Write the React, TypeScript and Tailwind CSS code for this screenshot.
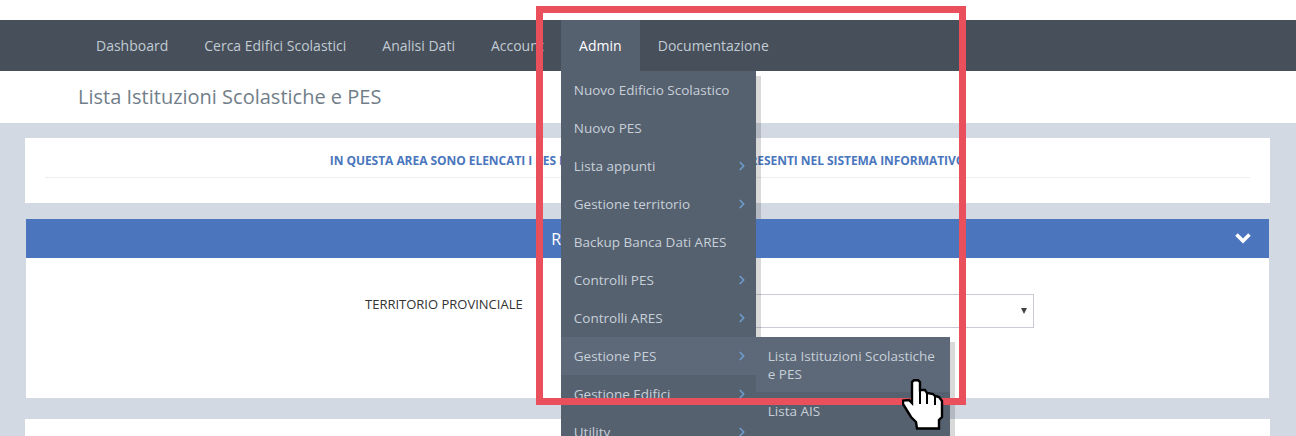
import { ChevronRight } from "lucide-react";

const adminItems = [
  { label: "Nuovo Edificio Scolastico" },
  { label: "Nuovo PES" },
  { label: "Lista appunti", arrow: true },
  { label: "Gestione territorio", arrow: true },
  { label: "Backup Banca Dati ARES" },
  { label: "Controlli PES", arrow: true },
  { label: "Controlli ARES", arrow: true },
  { label: "Gestione PES", arrow: true, active: true },
  { label: "Gestione Edifici", arrow: true },
  { label: "Utility", arrow: true },
];

function HandCursor() {
  return (
    <svg width="42" height="52" viewBox="0 0 42 52" className="absolute left-[902px] top-[379px]">
      <path
        d="M10 3 L12 1.2 L16 1.2 L18 3 L18 11 L23 11 L25 14 L31 15 L33 17 L37 18 L40 22 L40 38 L37 41 L37 49.5 L15 49.5 L14 43 L9 38 L1 25 L1 21.5 L7 21 L10 24 Z"
        fill="#fff"
        stroke="#000"
        strokeWidth="2.4"
        strokeLinejoin="miter"
      />
      <path d="M18 11 L18 25 M25 14 L25 25 M33 17 L33 26" fill="none" stroke="#000" strokeWidth="2" />
    </svg>
  );
}

export default function App() {
  return (
    <div className="relative h-[436px] w-full overflow-hidden bg-[#d3d9e3] font-['Open_Sans',sans-serif] text-sm">
      <div className="h-5 bg-white" />
      <nav className="flex h-[51px] items-stretch bg-[#474f5a] pl-[78px] text-[#c1cbd3]">
        <a className="flex items-center px-[18px]">Dashboard</a>
        <a className="flex items-center px-[18px]">Cerca Edifici Scolastici</a>
        <a className="flex items-center px-[18px]">Analisi Dati</a>
        <a className="flex items-center pl-[18px] pr-[17px]">Account</a>
        <div className="relative flex w-[79px] items-center justify-center bg-[#566170] font-medium text-white">
          Admin
          <div className="absolute left-[5px] top-[56px] z-[1] h-[380px] w-[195px] bg-black/15" />
          <ul className="absolute left-0 top-[51px] z-[3] w-[195px] bg-[#566170] text-[13.5px] font-normal leading-5 text-[#c7d0d8]">
            {adminItems.map((item) => (
              <li
                key={item.label}
                className={`relative flex h-[38px] items-center justify-between pl-[13px] pr-[7px] ${item.active ? "bg-[#5d6979]" : ""}`}
              >
                {item.label}
                {item.arrow && <ChevronRight size={14} strokeWidth={3} className="text-[#6b9ccc]" />}
                {item.active && (
                  <ul className="absolute left-[195px] top-0 w-[194px] bg-[#566170] shadow-[5px_5px_0_rgba(0,0,0,0.15)]">
                    <li className="bg-[#5d6979] pb-[9px] pl-3 pr-[10px] pt-[10px] leading-[18px]">
                      Lista Istituzioni Scolastiche e PES
                    </li>
                    <li className="flex h-[38px] items-center pl-3">Lista AIS</li>
                    <li className="h-[38px]" />
                  </ul>
                )}
              </li>
            ))}
          </ul>
        </div>
        <a className="flex items-center px-[18px]">Documentazione</a>
      </nav>
      <div className="flex h-[52px] items-center bg-white pl-[78px] text-xl text-[#717e89]">
        Lista Istituzioni Scolastiche e PES
      </div>

      <main className="flex flex-col pl-[25px] pr-[26px] pt-[15px]">
        <section className="h-[65px] bg-white px-5 pt-[13px]">
          <div className="h-[27px] border-b border-[#eeeeee] text-center text-xs font-bold leading-5 tracking-[-0.05px] text-[#4a76bd]">
            IN QUESTA AREA SONO ELENCATI I PES E LE ISTITUZIONI SCOLASTICHE PRESENTI NEL SISTEMA INFORMATIVO
          </div>
        </section>
        <section className="mx-px mt-4 h-[179px] bg-white">
          <header className="relative z-[2] flex h-[39px] items-center justify-center bg-[#4b76bd] text-base text-white">
            Ricerca di Istituzioni e PES
            <svg viewBox="0 0 18 12" className="absolute right-[17px] top-[13px] h-3 w-[18px]">
              <path d="M2.5 2.5 L9 9 L15.5 2.5" fill="none" stroke="#fff" strokeWidth="3.6" />
            </svg>
          </header>
          <div className="flex pl-[339px] pr-[235px] pt-9 text-[13px] text-[#333333]">
            <span className="leading-5">TERRITORIO PROVINCIALE</span>
            <div className="relative ml-[68px] h-[34px] flex-1 border border-[#c8cad6] bg-white">
              <svg viewBox="0 0 6 6" className="absolute right-[6px] top-[13px] h-[6px] w-[6px]">
                <path d="M0 0 H6 L3 6 Z" fill="#444" />
              </svg>
            </div>
          </div>
        </section>
        <section className="mt-[21px] h-20 bg-white" />
      </main>

      <div className="pointer-events-none absolute left-[536px] top-[6px] z-20 h-[399px] w-[430px] border-[7px] border-[#e9505c]" />
      <div className="absolute inset-0 z-30">
        <HandCursor />
      </div>
    </div>
  );
}
